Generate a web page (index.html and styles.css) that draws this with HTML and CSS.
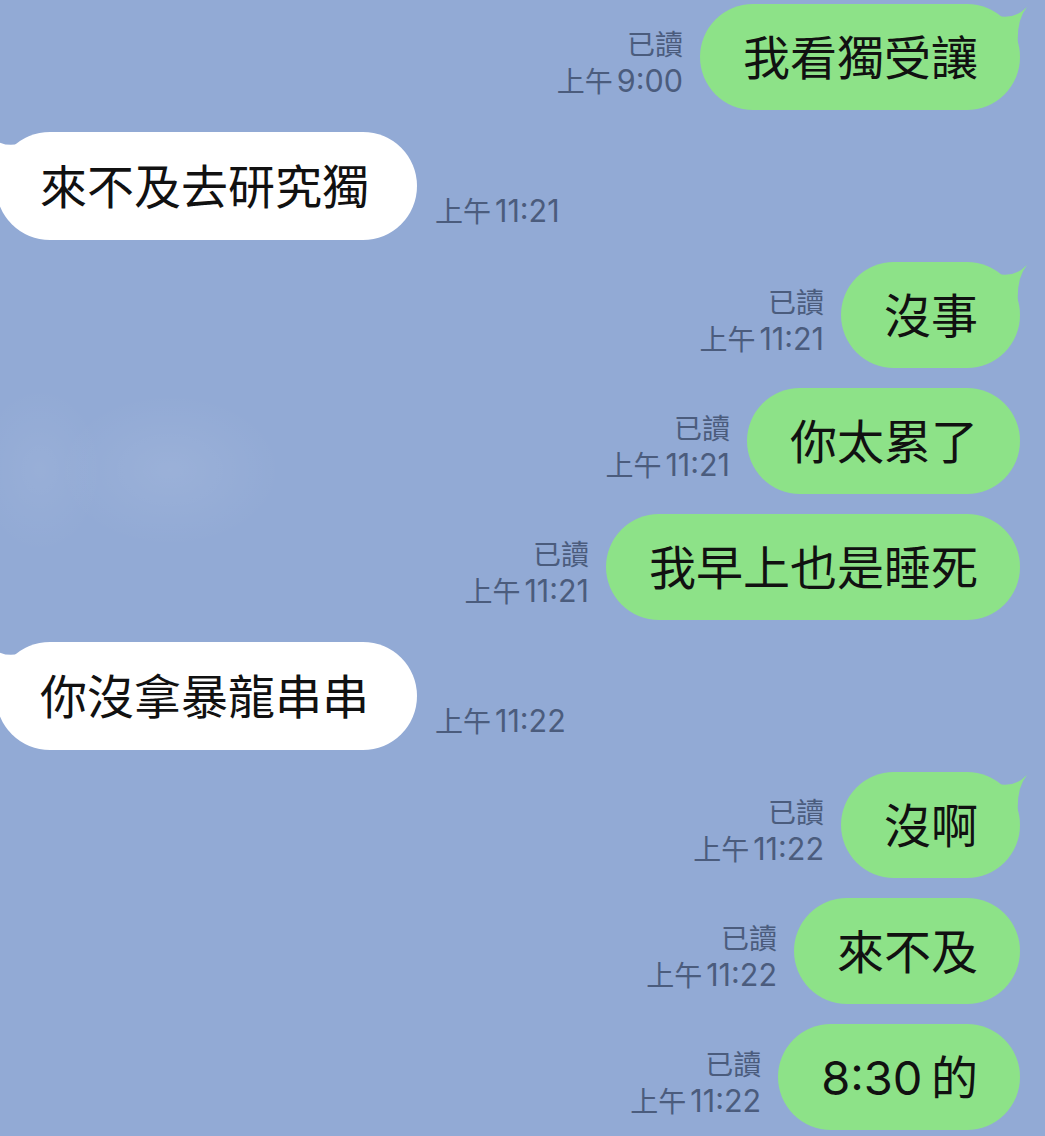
FILE: index.html
```html
<!DOCTYPE html>
<html lang="zh-Hant">
<head>
<meta charset="utf-8">
<title>Chat</title>
<link rel="stylesheet" href="styles.css">
</head>
<body>
<div class="chat">
  <div class="row out">
    <div class="meta"><span>已讀</span><span>上午<span class="num">9:00</span></span></div>
    <div class="bubble green tail">我看獨受讓<svg class="horn" viewBox="0 0 40 44"><path d="M0,9 Q22,19 38,3 Q27,16 29,44 L0,44 Z"/></svg></div>
  </div>
  <div class="row in">
    <div class="bubble white tail">來不及去研究獨<svg class="horn" viewBox="0 0 40 44"><path d="M0,9 Q22,19 38,3 Q27,16 29,44 L0,44 Z"/></svg></div>
    <div class="meta"><span>上午<span class="num">11:21</span></span></div>
  </div>
  <div class="row out">
    <div class="meta"><span>已讀</span><span>上午<span class="num">11:21</span></span></div>
    <div class="bubble green tail">沒事<svg class="horn" viewBox="0 0 40 44"><path d="M0,9 Q22,19 38,3 Q27,16 29,44 L0,44 Z"/></svg></div>
  </div>
  <div class="row out same">
    <div class="meta"><span>已讀</span><span>上午<span class="num">11:21</span></span></div>
    <div class="bubble green">你太累了</div>
  </div>
  <div class="row out same">
    <div class="meta"><span>已讀</span><span>上午<span class="num">11:21</span></span></div>
    <div class="bubble green">我早上也是睡死</div>
  </div>
  <div class="row in">
    <div class="bubble white tail">你沒拿暴龍串串<svg class="horn" viewBox="0 0 40 44"><path d="M0,9 Q22,19 38,3 Q27,16 29,44 L0,44 Z"/></svg></div>
    <div class="meta"><span>上午<span class="num">11:22</span></span></div>
  </div>
  <div class="row out">
    <div class="meta"><span>已讀</span><span>上午<span class="num">11:22</span></span></div>
    <div class="bubble green tail">沒啊<svg class="horn" viewBox="0 0 40 44"><path d="M0,9 Q22,19 38,3 Q27,16 29,44 L0,44 Z"/></svg></div>
  </div>
  <div class="row out same">
    <div class="meta"><span>已讀</span><span>上午<span class="num">11:22</span></span></div>
    <div class="bubble green">來不及</div>
  </div>
  <div class="row out same">
    <div class="meta"><span>已讀</span><span>上午<span class="num">11:22</span></span></div>
    <div class="bubble green">8:30&#8201;的</div>
  </div>
</div>
</body>
</html>
```

FILE: styles.css
```css
html, body {
  margin: 0;
  padding: 0;
}
body {
  width: 1045px;
  height: 1136px;
  overflow: hidden;
  background:
    radial-gradient(ellipse 90px 120px at 40px 470px, rgba(255,255,255,0.06), rgba(255,255,255,0) 70%),
    radial-gradient(ellipse 160px 110px at 170px 470px, rgba(255,255,255,0.08), rgba(255,255,255,0) 70%),
    #92aad5;
  font-family: Inter, "Noto Sans CJK TC", sans-serif;
}
.chat {
  display: flex;
  flex-direction: column;
  padding-top: 4px;
}
.row {
  display: flex;
  align-items: flex-end;
  margin-top: 22px;
}
.row:first-child {
  margin-top: 0;
}
.row.same {
  margin-top: 20px;
}
.row.out {
  justify-content: flex-end;
  padding-right: 25px;
}
.row.in {
  justify-content: flex-start;
  margin-left: -4px;
}
.bubble {
  position: relative;
  display: flex;
  align-items: center;
  height: 106px;
  padding: 0 42px 0 43px;
  border-radius: 54px;
  font-size: 47px;
  line-height: 1;
  color: #111;
  white-space: nowrap;
}
.bubble.green {
  background: #8de288;
}
.bubble.white {
  background: #ffffff;
  height: 108px;
  padding-left: 44px;
  padding-right: 48px;
}
.horn {
  position: absolute;
  top: 0;
  width: 40px;
  height: 44px;
}
.green .horn {
  right: -9px;
  fill: #8de288;
}
.white .horn {
  left: -9px;
  fill: #ffffff;
  transform: scaleX(-1);
}
.meta {
  display: flex;
  flex-direction: column;
  font-size: 28px;
  line-height: 35px;
  color: #4b5c7d;
  margin-bottom: 10px;
  white-space: nowrap;
}
.meta .num {
  font-size: 30.5px;
  margin-left: 4px;
}
.out .meta {
  align-items: flex-end;
  margin-right: 17px;
}
.in .meta {
  align-items: flex-start;
  margin-left: 18px;
}
```
